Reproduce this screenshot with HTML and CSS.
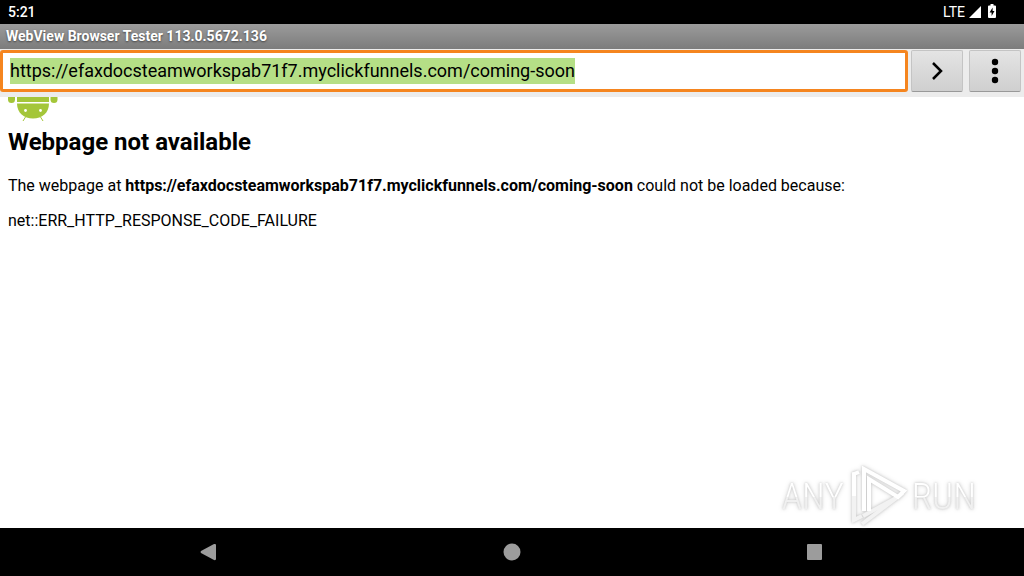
FILE: index.html
```html
<!DOCTYPE html>
<html lang="en">
   <head>
      <meta charset="utf-8">
      <meta name="viewport" content="width=device-width, initial-scale=1">
      <title>WebView Browser Tester</title>
      <link rel="stylesheet" href="styles.css">
   </head>
   <body>
      <div class="status-bar">
         <span>5:21</span>
         <div class="status-icons">
            <span>LTE</span>
            <svg width="12" height="12" viewBox="0 0 12 12"><path d="M12 0v12H0z" fill="#fff"/></svg>
            <svg class="battery" width="8" height="14" viewBox="0 0 8 14">
               <path d="M2.500 0h3v1.500H7q1 0 1 1V13q0 1-1 1H1q-1 0-1-1V2.500q0-1 1-1h1.500z" fill="#fff"/>
               <path d="M4.600 3.500L1.600 8.500h2v3.500l2.900-5h-1.900z" fill="#000"/>
            </svg>
         </div>
      </div>
      <header class="title-bar">WebView Browser Tester 113.0.5672.136</header>
      <form class="toolbar" onsubmit="return false;">
         <input type="text" id="url" class="url" aria-label="URL" spellcheck="false" value="https://efaxdocsteamworkspab71f7.myclickfunnels.com/coming-soon">
         <button type="submit" class="tool-button" aria-label="Load URL">
            <svg width="24" height="24" viewBox="0 0 24 24"><path d="M8 4l8 8-8 8" fill="none" stroke="#000" stroke-width="2.500"/></svg>
         </button>
         <button type="button" class="tool-button" aria-label="Menu">
            <svg width="8" height="26" viewBox="0 0 8 26"><circle cx="4" cy="4" r="3.200"/><circle cx="4" cy="13" r="3.200"/><circle cx="4" cy="22" r="3.200"/></svg>
         </button>
      </form>
      <main class="page">
         <svg class="android" width="50" height="25" viewBox="0 0 50 25">
            <g fill="#a4c639">
               <path d="M0 0h7v2.500a3.500 3.500 0 0 1-7 0z"/>
               <path d="M42.500 0h7v2.500a3.500 3.500 0 0 1-7 0z"/>
               <path d="M9 0h32v5H9z"/>
               <path d="M9 6.500h32C41 16 34 21.500 25 21.500S9 16 9 6.500z"/>
            </g>
            <path d="M17.500 20l-2.500 4M32.500 20l2.500 4" stroke="#a4c639"/>
            <circle cx="17.500" cy="13.500" r="1.400" fill="#fff"/>
            <circle cx="32.500" cy="13.500" r="1.400" fill="#fff"/>
         </svg>
         <h1>Webpage not available</h1>
         <p>The webpage at <strong>https://efaxdocsteamworkspab71f7.myclickfunnels.com/coming-soon</strong> could not be loaded because:</p>
         <p>net::ERR_HTTP_RESPONSE_CODE_FAILURE</p>
         <div class="watermark">
            <span>ANY</span>
            <svg width="58" height="62" viewBox="2 0 58 62">
               <g fill="none" stroke-width="4">
                  <path d="M7 6v48l8-4" stroke="#f2f2f2"/>
                  <path d="M16 50l33-18" stroke="#f2f2f2"/>
                  <path d="M15 58l41-31" stroke="#f2f2f2"/>
                  <path d="M12 6l-5 2v22M17 45V3l40 22-6 6-29-18v32" stroke="#fff"/>
               </g>
            </svg>
            <span>RUN</span>
         </div>
      </main>
      <nav class="nav-bar">
         <button type="button" aria-label="Back"><svg width="18" height="18" viewBox="0 0 18 18"><path d="M1 8Q0 9 1 10L14 17q2 .5 2-1V2q0-1.500-2-1z"/></svg></button>
         <button type="button" aria-label="Home"><svg width="18" height="18" viewBox="0 0 18 18"><circle cx="9" cy="9" r="8.500"/></svg></button>
         <button type="button" aria-label="Overview"><svg width="16" height="16" viewBox="0 0 16 16"><rect width="15" height="16" rx="1"/></svg></button>
      </nav>
      <script>
         // the address starts out focused and fully selected
         var url = document.getElementById("url");
         url.focus();
         url.select();
      </script>
   </body>
</html>
```
FILE: styles.css
```css
* {
   box-sizing: border-box;
}
body {
   display: flex;
   flex-direction: column;
   min-height: 100vh;
   margin: 0;
   font-family: Roboto, sans-serif;
   color: #000;
   background-color: #fff;
}
button {
   display: flex;
   align-items: center;
   justify-content: center;
   padding: 0;
   border: none;
}
.status-bar {
   display: flex;
   justify-content: space-between;
   height: 24px;
   padding: 0 28px 0 8px;
   line-height: 24px;
   font-size: 14px;
   font-weight: 500;
   color: #fff;
   background-color: #000;
}
.status-icons {
   display: flex;
   align-items: center;
   gap: 4px;
   font-weight: 400;
}
.battery {
   margin: 0 0 2px 3px;
}
.title-bar {
   height: 25px;
   padding: 0 6px;
   line-height: 24px;
   font-size: 14px;
   font-weight: bold;
   color: #fff;
   text-shadow: 0 1px 2px #444;
   background: linear-gradient(#9b9b9b, #7c7c7c);
}
.toolbar {
   display: flex;
   gap: 6px;
   height: 48px;
   padding: 1px 3px 5px 0;
   background-color: #ececec;
}
.url {
   flex: 1;
   min-width: 0;
   margin-right: -3px;
   padding: 0 7px;
   border: 3px solid #f5851f;
   border-radius: 3px;
   outline: none;
   font-family: Roboto, sans-serif;
   font-size: 18px;
   line-height: 26px;
   color: #000;
   background-color: #fff;
}
.url::selection {
   color: #000;
   background-color: #b5df86;
}
.tool-button {
   width: 52px;
   border: 1px solid #c4c4c4;
   border-bottom-color: #999;
   border-radius: 2px;
   background: linear-gradient(#e4e4e4, #cfcfcf);
}
.page {
   position: relative;
   flex: 1;
   padding: 0 8px;
   font-size: 16px;
   line-height: 19px;
}
.android {
   display: block;
}
h1 {
   margin: 6px 0 20px;
   font-size: 24px;
   line-height: 28px;
}
p {
   margin: 0 0 16px;
}
.watermark {
   position: absolute;
   right: 48px;
   bottom: 0;
   display: flex;
   align-items: center;
   gap: 5px;
   font-family: "Roboto Condensed", "Liberation Sans Narrow", Roboto, sans-serif;
   font-size: 37px;
   font-weight: 300;
   line-height: 48px;
   filter: drop-shadow(0 0 1px #c8c8c8) drop-shadow(0 0 2px #ddd);
}
.watermark span {
   color: transparent;
   background: linear-gradient(#fff 50%, #f0f0f0 50%);
   background-clip: text;
   -webkit-background-clip: text;
}
.nav-bar {
   display: flex;
   justify-content: center;
   gap: 207px;
   height: 48px;
   background-color: #000;
}
.nav-bar button {
   width: 96px;
   background-color: transparent;
}
.nav-bar svg {
   fill: #9c9c9c;
}
```
